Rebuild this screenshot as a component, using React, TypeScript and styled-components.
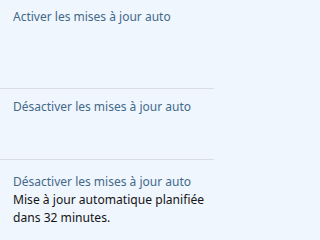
import styled, { createGlobalStyle } from 'styled-components'

const GlobalStyle = createGlobalStyle`
  html, body {
    margin: 0;
    padding: 0;
    background: #f0f6fd;
  }
`

const Panel = styled.div`
  display: flex;
  flex-direction: column;
  width: 214px;
  height: 238px;
  background: #f0f6fd;
  font-family: 'Noto Sans', 'Open Sans', sans-serif;
  font-size: 12px;
  line-height: 18px;
  overflow: hidden;
`
const Section = styled.div<{ h: number; pt: number; last?: boolean }>`
  display: flex;
  flex-direction: column;
  box-sizing: border-box;
  height: ${(props) => props.h}px;
  padding: ${(props) => props.pt}px 0 0 13px;
  border-bottom: ${(props) => (props.last ? 'none' : '1px solid #d9dee4')};
  white-space: nowrap;
`
const Link = styled.a`
  color: #42698a;
  text-decoration: none;
  cursor: pointer;
`
const Info = styled.div`
  color: #141414;
  font-size: 12.1px;
`

const App = () => {
  return (
    <>
      <GlobalStyle />
      <Panel>
        <Section h={89} pt={8}>
          <Link>Activer les mises à jour auto</Link>
        </Section>
        <Section h={71} pt={9}>
          <Link>Désactiver les mises à jour auto</Link>
        </Section>
        <Section h={78} pt={13} last>
          <Link>Désactiver les mises à jour auto</Link>
          <Info>
            Mise à jour automatique planifiée
            <br />
            dans 32 minutes.
          </Info>
        </Section>
      </Panel>
    </>
  )
}

export default App
